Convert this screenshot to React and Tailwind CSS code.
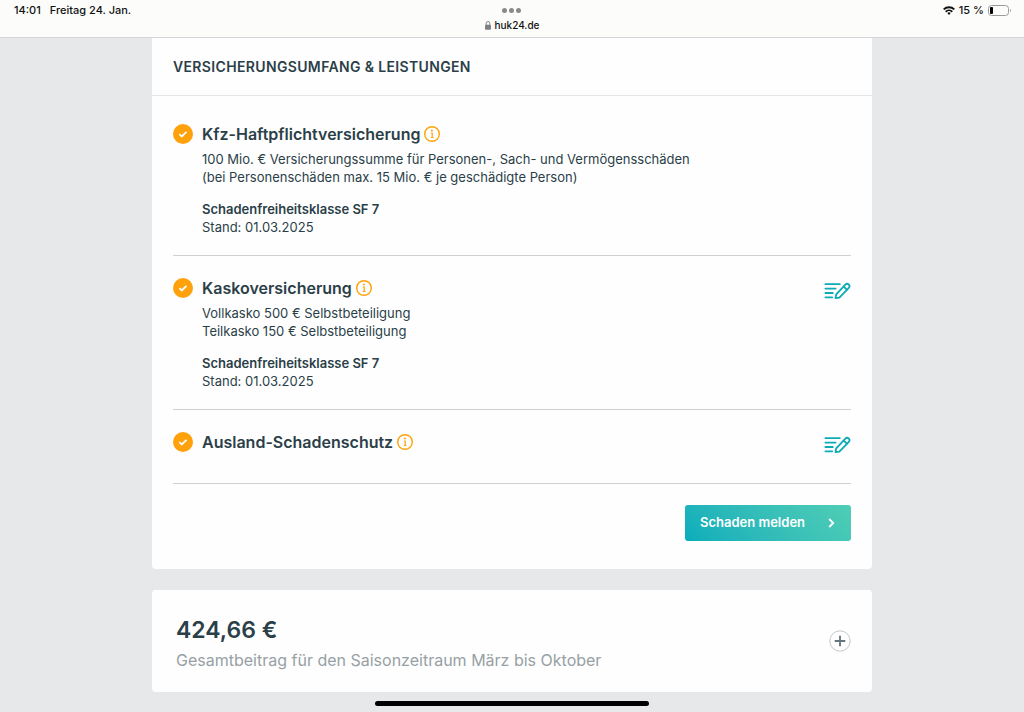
const coverages = [
  {
    title: 'Kfz-Haftpflichtversicherung',
    lines: [
      '100 Mio. € Versicherungssumme für Personen-, Sach- und Vermögensschäden',
      '(bei Personenschäden max. 15 Mio. € je geschädigte Person)',
    ],
    sfClass: 'Schadenfreiheitsklasse SF 7',
    date: 'Stand: 01.03.2025',
    editable: false,
  },
  {
    title: 'Kaskoversicherung',
    lines: ['Vollkasko 500 € Selbstbeteiligung', 'Teilkasko 150 € Selbstbeteiligung'],
    sfClass: 'Schadenfreiheitsklasse SF 7',
    date: 'Stand: 01.03.2025',
    editable: true,
  },
  {
    title: 'Ausland-Schadenschutz',
    lines: [],
    editable: true,
  },
];

function WifiIcon() {
  return (
    <svg width="12" height="9" viewBox="0 0 12 9" fill="none" stroke="#111" strokeWidth="1.9">
      <path d="M0.7 3.4a7.6 7.6 0 0 1 10.6 0" />
      <path d="M2.7 5.7a4.7 4.7 0 0 1 6.6 0" />
      <path d="M6 8.9 4.3 7.1a2.5 2.5 0 0 1 3.4 0z" fill="#111" stroke="none" />
    </svg>
  );
}

function BatteryIcon() {
  return (
    <svg width="24" height="11" viewBox="0 0 24 11" fill="none">
      <rect x="0.5" y="0.5" width="20" height="10" rx="3" stroke="#9b9b9b" />
      <rect x="2" y="2" width="3" height="7" rx="1" fill="#000" />
      <path d="M22 3.8v3.4c1.2-.5 1.2-2.9 0-3.4z" fill="#9b9b9b" />
    </svg>
  );
}

function LockIcon() {
  return (
    <svg width="6" height="9" viewBox="0 0 6 9" fill="none">
      <rect x="0" y="3.7" width="6" height="5" rx="0.9" fill="#7d7f80" />
      <path d="M1.2 4V2.3a1.8 1.8 0 0 1 3.6 0V4" stroke="#7d7f80" strokeWidth="0.9" />
    </svg>
  );
}

function CheckBadge() {
  return (
    <svg className="shrink-0" width="20" height="20" viewBox="0 0 20 20" fill="none">
      <circle cx="10" cy="10" r="10" fill="#ffa10a" />
      <path d="m6.4 10.1 2.4 2.3 4.7-4.6" stroke="#fff" strokeWidth="1.8" />
    </svg>
  );
}

function InfoIcon() {
  return (
    <svg width="16" height="16" viewBox="0 0 16 16" fill="none" stroke="#ffa10a">
      <circle cx="8" cy="8" r="7.3" strokeWidth="1.4" />
      <path d="M6.8 7h1.4v4.6M6.8 11.5h2.8" strokeWidth="1.2" />
      <circle cx="7.9" cy="4.5" r="1" fill="#ffa10a" stroke="none" />
    </svg>
  );
}

function EditIcon() {
  return (
    <svg width="27" height="18" viewBox="0 0 27 18" fill="none" stroke="#0cabb6" strokeWidth="1.8" strokeLinecap="round">
      <path d="M1.4 2.2h14.4M1.4 6.6h10.2M1.4 11h7.4M1.4 15.3h6.8" />
      <path d="m12.2 12.4 9.2-9.8a2.3 2.3 0 0 1 3.4 3.2l-9.4 9.8-3.9.6z" strokeLinejoin="round" />
      <path d="m19.8 4.6 3 3" />
    </svg>
  );
}

function StatusBar() {
  return (
    <header className="grid grid-cols-3 h-[38px] border-b border-[#d3d5d7] bg-[#fcfcfb] text-[11px] leading-[14px] font-medium text-[#111]">
      <div className="flex gap-[9px] pl-[14px] pt-[3px]">
        <span>14:01</span>
        <span>Freitag 24. Jan.</span>
      </div>
      <div className="flex flex-col items-center pt-2">
        <div className="flex gap-[2px]">
          <span className="size-[5px] rounded-full bg-[#8a8a8a]" />
          <span className="size-[5px] rounded-full bg-[#8a8a8a]" />
          <span className="size-[5px] rounded-full bg-[#8a8a8a]" />
        </div>
        <div className="flex items-center gap-1 mt-[5px] text-[10px]">
          <LockIcon />
          <span>huk24.de</span>
        </div>
      </div>
      <div className="flex items-start justify-end pr-3 pt-[3px]">
        <div className="flex items-center gap-1 h-[14px]">
          <WifiIcon />
          <span>15 %</span>
          <BatteryIcon />
        </div>
      </div>
    </header>
  );
}

function CoverageRow({ item }) {
  return (
    <li className="flex items-start gap-[9px] pt-5 pb-[19px] border-b border-[#ced1d4]">
      <div className="flex items-center h-6">
        <CheckBadge />
      </div>
      <div className="grow">
        <div className="flex items-center gap-1 h-6">
          <h3 className="text-base leading-6 font-semibold">{item.title}</h3>
          <button type="button" aria-label={`Info zu ${item.title}`}>
            <InfoIcon />
          </button>
        </div>
        {item.lines.length > 0 && (
          <p className="mt-1 text-[13px] leading-[18px]">
            {item.lines.map((line) => (
              <span key={line} className="block">{line}</span>
            ))}
          </p>
        )}
        {item.sfClass && (
          <div className="mt-[14px] text-[13px] leading-[18px]">
            <p className="font-semibold">{item.sfClass}</p>
            <p>{item.date}</p>
          </div>
        )}
        {item.lines.length === 0 && <div className="h-[10px]" />}
      </div>
      {item.editable && (
        <button type="button" className="mt-[6px]" aria-label={`${item.title} bearbeiten`}>
          <EditIcon />
        </button>
      )}
    </li>
  );
}

export default function App() {
  return (
    <div className="min-h-screen bg-[#e6e8ea] font-['Inter',sans-serif] text-[#2b3f48]">
      <StatusBar />

      <main className="max-w-[720px] mx-auto pb-5">
        {/* Coverage card */}
        <section className="bg-[#fefefe] rounded-b-sm">
          <h2 className="px-[21px] py-[18px] border-b border-[#e3e5e7] text-sm leading-[21px] font-semibold uppercase tracking-wide">
            Versicherungsumfang & Leistungen
          </h2>
          <div className="px-[21px] pt-[6px] pb-7">
            <ul>
              {coverages.map((item) => (
                <CoverageRow key={item.title} item={item} />
              ))}
            </ul>
            <div className="flex justify-end mt-[21px]">
              <button
                type="button"
                className="flex items-center justify-between w-[166px] h-9 pl-[15px] pr-4 rounded-[3px] bg-linear-45 from-[#06adbb] to-[#4fceb5] text-[13px] font-semibold text-white"
              >
                Schaden melden
                <svg width="7" height="10" viewBox="0 0 7 10" fill="none" stroke="currentColor" strokeWidth="1.8">
                  <path d="m1.2 1 4 4-4 4" />
                </svg>
              </button>
            </div>
          </div>
        </section>

        {/* Total premium card */}
        <section className="flex items-center justify-between mt-[21px] pl-6 pr-[21px] py-5 bg-[#fefefe] rounded-sm">
          <div className="pt-1">
            <p className="text-[23px] leading-8 font-semibold">424,66 €</p>
            <p className="mt-[2px] text-base leading-6 text-[#97a0a5]">
              Gesamtbeitrag für den Saisonzeitraum März bis Oktober
            </p>
          </div>
          <button type="button" aria-label="Details anzeigen">
            <svg width="22" height="22" viewBox="0 0 22 22" fill="none">
              <circle cx="11" cy="11" r="10.2" stroke="#c3c8cc" />
              <path d="M11 5.7v10.6M5.7 11h10.6" stroke="#65747d" strokeWidth="1.8" />
            </svg>
          </button>
        </section>
      </main>

      {/* Home indicator */}
      <div className="fixed bottom-[6px] left-1/2 -translate-x-1/2 w-[274px] h-[5px] rounded-full bg-black" />
    </div>
  );
}
